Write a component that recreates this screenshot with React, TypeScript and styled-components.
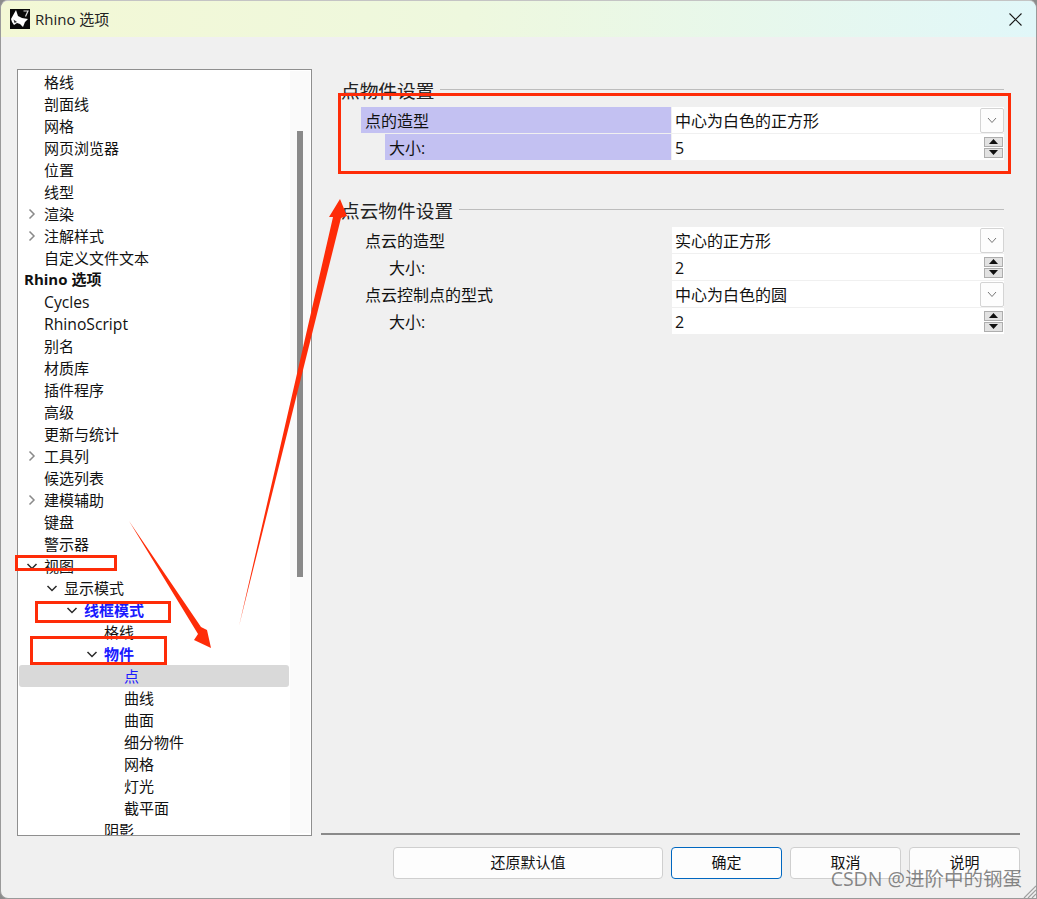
import React from "react";
import styled, { createGlobalStyle } from "styled-components";

const Global = createGlobalStyle`
  html, body { margin: 0; padding: 0; background: #8c8c8c; }
  body { width: 1037px; height: 899px; overflow: hidden; }
  * { box-sizing: border-box; }
`;

const FONT = `"Open Sans", "Noto Sans CJK SC", sans-serif`;

const Win = styled.div`
  position: relative;
  width: 1037px;
  height: 899px;
  background: #f0f0f0;
  border: 1px solid #9a9a9a;
  border-top-color: #c4c4c4;
  border-radius: 8px 8px 0 8px;
  font-family: ${FONT};
  font-size: 15px;
  color: #111;
  display: flex;
  flex-direction: column;
  overflow: hidden;
`;

const TitleBar = styled.div`
  height: 36px;
  flex: none;
  display: flex;
  align-items: center;
  padding: 0 14px 0 9px;
  background: linear-gradient(90deg, #f3f8d5 0%, #eef8de 45%, #e1f7f9 100%);
`;

const TitleText = styled.div`
  margin-left: 5px;
  margin-top: -2px;
  color: #222;
  flex: 1;
  font-size: 15px;
`;

const Main = styled.div`
  flex: none;
  display: flex;
  padding: 32px 16px 0 16px;
`;

const TreeBox = styled.div`
  width: 295px;
  height: 767px;
  flex: none;
  display: flex;
  background: #fff;
  border: 1px solid #8f8f8f;
  overflow: hidden;
`;

const TreeList = styled.div`
  flex: 1;
  margin: 0 1px;
  padding-top: 1px;
  overflow: hidden;
`;

const Row = styled.div<{ $depth: number; $selected?: boolean; $blue?: boolean; $bold?: boolean; $latin?: boolean }>`
  height: 22px;
  display: flex;
  align-items: center;
  padding-left: ${(p) => (p.$depth < 0 ? 5 : 5 + p.$depth * 20)}px;
  background: ${(p) => (p.$selected ? "#d9d9d9" : "transparent")};
  border-radius: 3px;
  color: ${(p) => (p.$blue ? "#1a1aff" : "#111")};
  font-weight: ${(p) => (p.$bold ? 700 : 400)};
  font-size: ${(p) => (p.$latin ? "15.7px" : "15px")};
  white-space: nowrap;
  line-height: 22px;
`;

const RowText = styled.span<{ $lift?: boolean }>`
  margin-top: ${(p) => (p.$lift ? -2 : 0)}px;
`;

const ArrowSlot = styled.span`
  width: 20px;
  height: 22px;
  flex: none;
  display: flex;
  align-items: center;
  padding-left: 2px;
`;

const ScrollTrack = styled.div`
  width: 20px;
  flex: none;
  margin: 1px 1px 2px 0;
  background: #fafafa;
  display: flex;
  justify-content: center;
  padding-top: 60px;
`;

const ScrollThumb = styled.div`
  width: 6px;
  height: 446px;
  background: #8a8a8a;
`;

const Panel = styled.div`
  flex: 1;
  margin-left: 9px;
  height: 767px;
  display: flex;
  flex-direction: column;
`;

const Groups = styled.div`
  flex: 1;
  padding: 11px 16px 0 21px;
  display: flex;
  flex-direction: column;
  gap: 39px;
`;

const Group = styled.div``;

const GroupHead = styled.div`
  height: 22px;
  display: flex;
  font-size: 18.7px;
  line-height: 22px;
  color: #222;
  margin: 0 0 5px -1px;
  white-space: nowrap;
`;

const GroupLine = styled.div`
  flex: 1;
  height: 1px;
  margin: 9px 0 0 6px;
  background: #bdbdbd;
`;

const PropRow = styled.div`
  height: 26px;
  margin-bottom: 1px;
  margin-left: 19px;
  display: flex;
  font-size: 16px;
`;

const PropLabel = styled.div<{ $sub?: boolean; $hi?: boolean }>`
  width: ${(p) => (p.$sub ? 286 : 310)}px;
  margin-left: ${(p) => (p.$sub ? 24 : 0)}px;
  padding-left: 4px;
  line-height: 28px;
  background: ${(p) => (p.$hi ? "#c3c1f2" : "transparent")};
  flex: none;
`;

const PropValue = styled.div`
  flex: 1;
  margin-left: 1px;
  background: #fff;
  display: flex;
  align-items: center;
  justify-content: space-between;
  padding-left: 3px;
  line-height: 26px;
`;

const ValueText = styled.span`
  padding-top: 2px;
`;

const DropBtn = styled.div`
  width: 24px;
  height: 25px;
  margin-top: 1px;
  background: #fdfdfd;
  border: 1px solid #d4d4d4;
  border-radius: 2px;
  display: flex;
  align-items: center;
  justify-content: center;
`;

const Spinner = styled.div`
  width: 19px;
  margin-right: 1px;
  display: flex;
  flex-direction: column;
  gap: 1px;
`;

const SpinBtn = styled.div`
  height: 10px;
  background: #e2e2e2;
  border: 1px solid #aeaeae;
  display: flex;
  align-items: center;
  justify-content: center;
`;

const Divider = styled.div`
  height: 2px;
  margin-bottom: 1px;
  background: #8a8a8a;
`;

const Footer = styled.div`
  flex: 1;
  display: flex;
  justify-content: flex-end;
  gap: 8px;
  padding: 11px 16px 0 0;
`;

const Btn = styled.div<{ $w: number; $primary?: boolean }>`
  width: ${(p) => p.$w}px;
  height: 32px;
  padding-bottom: 3px;
  background: #fdfdfd;
  border: 1px solid ${(p) => (p.$primary ? "#0067c0" : "#cfcfcf")};
  border-radius: 4px;
  display: flex;
  align-items: center;
  justify-content: center;
  color: #111;
`;

const Overlay = styled.svg`
  position: absolute;
  left: -1px;
  top: -1px;
  width: 1037px;
  height: 899px;
  pointer-events: none;
`;

const Watermark = styled.div`
  position: absolute;
  right: 14px;
  bottom: 6px;
  font-size: 19.5px;
  line-height: 26px;
  color: rgba(90, 90, 90, 0.72);
  white-space: nowrap;
`;

const Logo = () => (
  <svg width="20" height="20" viewBox="0 0 20 20">
    <rect width="20" height="20" fill="#0a0a0a" />
    <path d="M1 10 L6 1 L8 7 L12 9 L18 10 L15 13 L13 18 L10 15 L7 14 L4 16 L2 13 Z" fill="#fff" />
    <path d="M3.5 10.5 L7 13 L4.5 14 Z" fill="#333" />
    <path d="M13.5 2 H18 L15.5 7.5" fill="none" stroke="#ddd" strokeWidth="1.2" />
  </svg>
);

const Chevron = ({ open }: { open: boolean }) =>
  open ? (
    <svg width="12" height="12" viewBox="0 0 12 12">
      <path d="M1.5 4 L6 8.5 L10.5 4" fill="none" stroke="#2a2a2a" strokeWidth="1.5" />
    </svg>
  ) : (
    <svg width="12" height="12" viewBox="0 0 12 12">
      <path d="M3.5 1.5 L8 6 L3.5 10.5" fill="none" stroke="#8a8a8a" strokeWidth="1.5" />
    </svg>
  );

type Item = { t: string; d: number; a?: "open" | "closed"; sel?: boolean; blue?: boolean; bold?: boolean; latin?: boolean };

const items: Item[] = [
  { t: "格线", d: 1 },
  { t: "剖面线", d: 1 },
  { t: "网格", d: 1 },
  { t: "网页浏览器", d: 1 },
  { t: "位置", d: 1 },
  { t: "线型", d: 1 },
  { t: "渲染", d: 0, a: "closed" },
  { t: "注解样式", d: 0, a: "closed" },
  { t: "自定义文件文本", d: 1 },
  { t: "Rhino 选项", d: -1, bold: true },
  { t: "Cycles", d: 1, latin: true },
  { t: "RhinoScript", d: 1, latin: true },
  { t: "别名", d: 1 },
  { t: "材质库", d: 1 },
  { t: "插件程序", d: 1 },
  { t: "高级", d: 1 },
  { t: "更新与统计", d: 1 },
  { t: "工具列", d: 0, a: "closed" },
  { t: "候选列表", d: 1 },
  { t: "建模辅助", d: 0, a: "closed" },
  { t: "键盘", d: 1 },
  { t: "警示器", d: 1 },
  { t: "视图", d: 0, a: "open" },
  { t: "显示模式", d: 1, a: "open" },
  { t: "线框模式", d: 2, a: "open", blue: true, bold: true },
  { t: "格线", d: 4 },
  { t: "物件", d: 3, a: "open", blue: true, bold: true },
  { t: "点", d: 5, sel: true, blue: true },
  { t: "曲线", d: 5 },
  { t: "曲面", d: 5 },
  { t: "细分物件", d: 5 },
  { t: "网格", d: 5 },
  { t: "灯光", d: 5 },
  { t: "截平面", d: 5 },
  { t: "阴影", d: 4 },
];

const TreeRow = ({ item }: { item: Item }) => {
  const slot = item.d >= 0 && item.a;
  const depth = item.d < 0 ? -1 : slot ? item.d : item.d - 1;
  return (
    <Row $depth={depth} $selected={item.sel} $blue={item.blue} $bold={item.bold} $latin={item.latin}>
      {item.d >= 0 && (
        <ArrowSlot>{item.a ? <Chevron open={item.a === "open"} /> : null}</ArrowSlot>
      )}
      <RowText $lift={item.d < 0}>{item.t}</RowText>
    </Row>
  );
};

const Combo = ({ v }: { v: string }) => (
  <PropValue>
    <ValueText>{v}</ValueText>
    <DropBtn>
      <svg width="10" height="7" viewBox="0 0 10 7">
        <path d="M1 1 L5 5.5 L9 1" fill="none" stroke="#777" strokeWidth="1" />
      </svg>
    </DropBtn>
  </PropValue>
);

const Num = ({ v }: { v: string }) => (
  <PropValue>
    <ValueText>{v}</ValueText>
    <Spinner>
      <SpinBtn>
        <svg width="9" height="5" viewBox="0 0 9 5">
          <path d="M4.5 0 L9 5 H0 Z" fill="#111" />
        </svg>
      </SpinBtn>
      <SpinBtn>
        <svg width="9" height="5" viewBox="0 0 9 5">
          <path d="M0 0 H9 L4.5 5 Z" fill="#111" />
        </svg>
      </SpinBtn>
    </Spinner>
  </PropValue>
);

const RED = "#fe2c08";

export default function App() {
  return (
    <>
      <Global />
      <Win>
        <TitleBar>
          <Logo />
          <TitleText>Rhino 选项</TitleText>
          <svg width="13" height="13" viewBox="0 0 13 13">
            <path d="M0.5 0.5 L12.5 12.5 M12.5 0.5 L0.5 12.5" stroke="#1a1a1a" strokeWidth="1.1" />
          </svg>
        </TitleBar>
        <Main>
          <TreeBox>
            <TreeList>
              {items.map((it, i) => (
                <TreeRow key={i} item={it} />
              ))}
            </TreeList>
            <ScrollTrack>
              <ScrollThumb />
            </ScrollTrack>
          </TreeBox>
          <Panel>
            <Groups>
              <Group>
                <GroupHead>
                  点物件设置
                  <GroupLine />
                </GroupHead>
                <PropRow>
                  <PropLabel $hi>点的造型</PropLabel>
                  <Combo v="中心为白色的正方形" />
                </PropRow>
                <PropRow>
                  <PropLabel $hi $sub>
                    大小:
                  </PropLabel>
                  <Num v="5" />
                </PropRow>
              </Group>
              <Group>
                <GroupHead>
                  点云物件设置
                  <GroupLine />
                </GroupHead>
                <PropRow>
                  <PropLabel>点云的造型</PropLabel>
                  <Combo v="实心的正方形" />
                </PropRow>
                <PropRow>
                  <PropLabel $sub>大小:</PropLabel>
                  <Num v="2" />
                </PropRow>
                <PropRow>
                  <PropLabel>点云控制点的型式</PropLabel>
                  <Combo v="中心为白色的圆" />
                </PropRow>
                <PropRow>
                  <PropLabel $sub>大小:</PropLabel>
                  <Num v="2" />
                </PropRow>
              </Group>
            </Groups>
            <Divider />
          </Panel>
        </Main>
        <Footer>
          <Btn $w={270}>还原默认值</Btn>
          <Btn $w={111} $primary>
            确定
          </Btn>
          <Btn $w={111}>取消</Btn>
          <Btn $w={111}>说明</Btn>
        </Footer>
        <Watermark>CSDN @进阶中的钢蛋</Watermark>
        <Overlay viewBox="0 0 1037 899">
          <g fill="none" stroke={RED} strokeWidth="3">
            <rect x="339.5" y="94.5" width="670" height="78" />
            <rect x="16.5" y="556.5" width="99" height="13" />
            <rect x="36.5" y="602.5" width="133" height="19" />
            <rect x="31.5" y="637.5" width="134" height="26" />
          </g>
          <polygon fill={RED} points="129,521 201,627 207,630 211,648 194,640 198,634" />
          <polygon fill={RED} points="239,626 333,217 329,217 340,199 347,216 341,218" />
          <g stroke="#a0a0a0" strokeWidth="1.2">
            <path d="M1036 886 L1024 898 M1036 890 L1028 898 M1036 894 L1032 898" />
          </g>
        </Overlay>
      </Win>
    </>
  );
}
